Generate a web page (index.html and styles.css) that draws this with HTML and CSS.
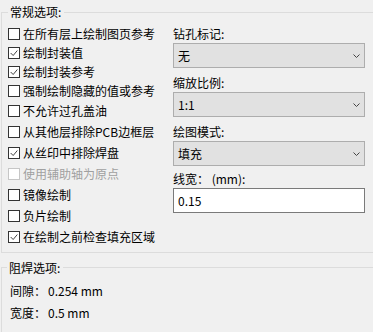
FILE: index.html
```
<!DOCTYPE html>
<html>
<head>
    <title>打印选项</title>
<link rel="stylesheet" href="styles.css">
</head>
<body>

    <fieldset class="group general">
        <legend>常规选项:</legend>

        <div class="checks">
            <label class="check short"><span class="box"></span>在所有层上绘制图页参考</label>
            <label class="check short checked"><span class="box"><svg viewBox="0 0 12 12"><polyline points="2,6 5,9 10,3"/></svg></span>绘制封装值</label>
            <label class="check short checked"><span class="box"><svg viewBox="0 0 12 12"><polyline points="2,6 5,9 10,3"/></svg></span>绘制封装参考</label>
            <label class="check short"><span class="box"></span>强制绘制隐藏的值或参考</label>
            <label class="check"><span class="box"></span>不允许过孔盖油</label>
            <label class="check"><span class="box"></span>从其他层排除PCB边框层</label>
            <label class="check checked"><span class="box"><svg viewBox="0 0 12 12"><polyline points="2,6 5,9 10,3"/></svg></span>从丝印中排除焊盘</label>
            <label class="check disabled"><span class="box"></span>使用辅助轴为原点</label>
            <label class="check"><span class="box"></span>镜像绘制</label>
            <label class="check"><span class="box"></span>负片绘制</label>
            <label class="check checked"><span class="box"><svg viewBox="0 0 12 12"><polyline points="2,6 5,9 10,3"/></svg></span>在绘制之前检查填充区域</label>
        </div>

        <div class="fields">
            <div class="field-label">钻孔标记:</div>
            <div class="select"><span>无</span><svg class="chev" viewBox="0 0 7 4"><polyline points="0.5,0.5 3.5,3.5 6.5,0.5"/></svg></div>

            <div class="field-label">缩放比例:</div>
            <div class="select"><span>1:1</span><svg class="chev" viewBox="0 0 7 4"><polyline points="0.5,0.5 3.5,3.5 6.5,0.5"/></svg></div>

            <div class="field-label">绘图模式:</div>
            <div class="select"><span>填充</span><svg class="chev" viewBox="0 0 7 4"><polyline points="0.5,0.5 3.5,3.5 6.5,0.5"/></svg></div>

            <div class="field-label last">线宽：&nbsp;(mm):</div>
            <div class="textbox">0.15</div>
        </div>
    </fieldset>

    <fieldset class="group mask">
        <legend>阻焊选项:</legend>
        <div class="info"><span class="name">间隙：</span>0.254 mm</div>
        <div class="info"><span class="name">宽度：</span>0.5 mm</div>
    </fieldset>

</body>
</html>
```

FILE: styles.css
```
body {
    margin: 0;
    background: #f0f0f0;
    color: #000;
    font: 12px/16px "Noto Sans CJK SC", "Liberation Sans", sans-serif;
    width: 373px;
    height: 332px;
    overflow: hidden;
}

.group {
    margin: 4px 0 0 1px;
    padding: 0;
    border: solid 1px #dcdcdc;
    width: 370px;
}
.group legend {
    margin-left: 0;
    padding: 0 3px 0 2px;
    line-height: 16px;
}

.general {
    display: grid;
    grid-template-columns: 165px 192px;
    padding: 4px 0 4px 6px;
}
.mask {
    margin-top: 7px;
    padding: 4px 0 9px 8px;
}
.mask legend {
    margin-left: -3px;
}

/* checkboxes */
.check {
    display: flex;
    align-items: center;
    height: 21px;
    white-space: nowrap;
}
.check.short {
    height: 19px;
}
.checks {
    padding-top: 0.5px;
}
.box {
    box-sizing: border-box;
    width: 12px;
    height: 12px;
    margin: 0 3px 0 0;
    border: solid 1px #333;
    background: #fff;
    flex: none;
}
.box svg {
    display: block;
    width: 10px;
    height: 10px;
    fill: none;
    stroke: #333;
    stroke-width: 1.1;
}
.check.disabled {
    color: #a0a0a0;
}
.check.disabled .box {
    border-color: #c6c6c6;
}

/* right column */
.fields {
    padding-top: 2px;
}
.field-label {
    height: 16px;
    margin-bottom: 1px;
}
.field-label.last {
    margin-top: -2px;
}
.select, .textbox {
    box-sizing: border-box;
    height: 25px;
    display: flex;
    align-items: center;
    padding: 0 0 0 4px;
    margin-bottom: 7px;
}
.select {
    background: #e1e1e1;
    border: solid 1px #adadad;
}
.select span {
    flex: 1;
}
.chev {
    width: 7px;
    height: 4px;
    margin-right: 4px;
    fill: none;
    stroke: #444;
    stroke-width: 1;
}
.textbox {
    background: #fff;
    border: solid 1px #7a7a7a;
}

/* solder mask */
.info {
    height: 22px;
    display: flex;
    align-items: center;
}
.info .name {
    display: inline-block;
    width: 38px;
}
```
